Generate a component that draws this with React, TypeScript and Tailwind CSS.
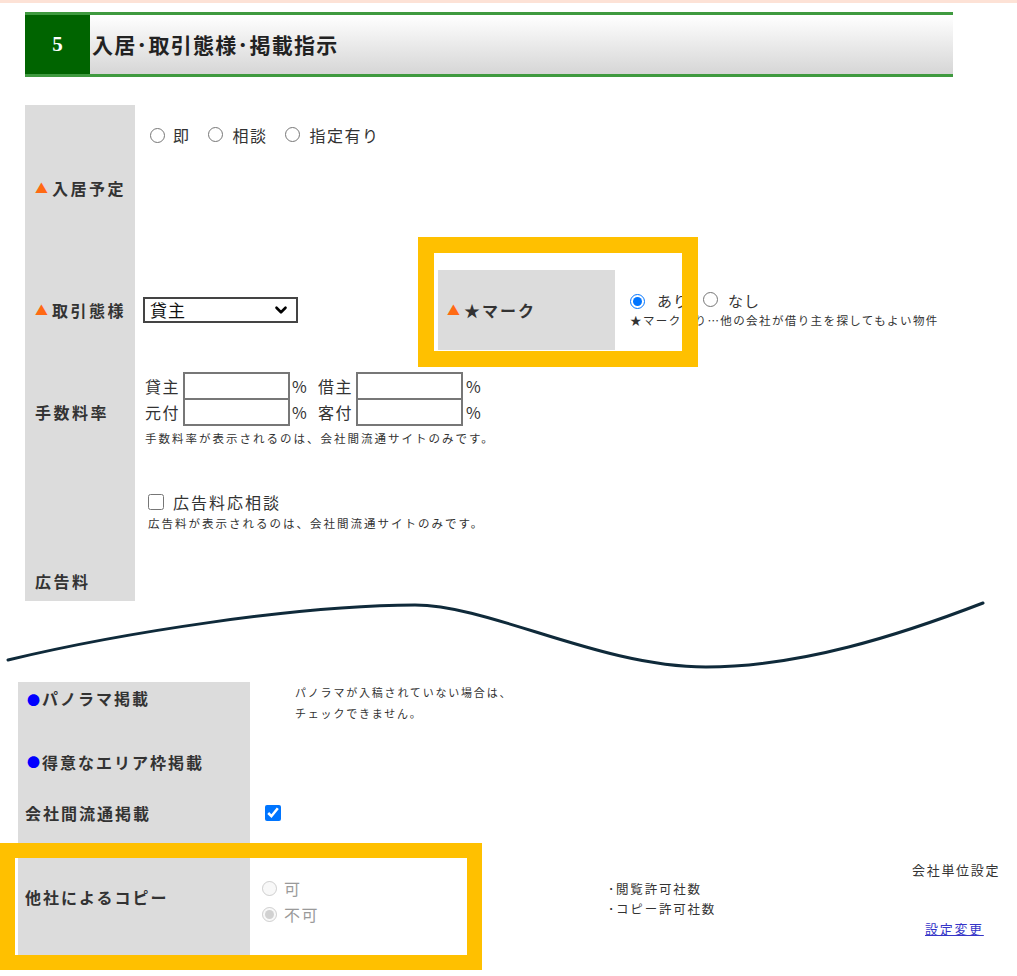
import { ChevronDown } from 'lucide-react'
import type { ReactNode } from 'react'

function Tri() {
  return <span className="text-[#ff6a13] text-[13px] mr-[4px] tracking-normal">▲</span>
}

function Dot() {
  return <span className="text-[#0000ff] text-[13px] mr-[2px] tracking-normal">●</span>
}

function Label({ children, className = '' }: { children: ReactNode; className?: string }) {
  return (
    <div className={`w-[110px] shrink-0 bg-[#dcdcdc] flex pl-[10px] font-bold text-[16px] tracking-[2.5px] text-[#333] ${className}`}>
      {children}
    </div>
  )
}

function Radio({ name, checked, disabled }: { name: string; checked?: boolean; disabled?: boolean }) {
  return (
    <input
      type="radio"
      name={name}
      defaultChecked={checked}
      disabled={disabled}
      className="m-0 w-[15px] h-[15px] accent-[#0075ff]"
    />
  )
}

function FeeInput() {
  return <div className="w-[107px] h-[28px] border-2 border-[#777] bg-white" />
}

export default function App() {
  return (
    <div className="relative w-[1017px] h-[976px] bg-white overflow-hidden font-['Noto_Sans_CJK_JP','Noto_Sans',sans-serif] text-[#333]">
      <div className="h-[3px] bg-[#fde2d6]" />

      {/* section header */}
      <div className="ml-[25px] mt-[9px] w-[928px] h-[65px] flex border-y-[3px] border-[#3f9a3f]">
        <div className="w-[65px] bg-[#006400] flex items-center justify-center text-white font-bold text-[21px] font-['Liberation_Serif',serif]">
          5
        </div>
        <div className="flex-1 bg-linear-to-b from-white to-[#d6d6d6] flex items-center pl-[2px] text-[21px] font-bold tracking-[1.3px] text-[#222]">
          入居･取引態様･掲載指示
        </div>
      </div>

      {/* upper table */}
      <div className="ml-[25px] mt-[28px] w-[928px]">
        <div className="flex h-[165px]">
          <Label className="items-center">
            <Tri />入居予定
          </Label>
          <div className="flex items-center pl-[15px] pt-[18px] self-start text-[16px] tracking-[1.5px] leading-[24px]">
            <Radio name="nyukyo" />
            <span className="ml-[8px]">即</span>
            <span className="ml-[17px]"><Radio name="nyukyo" /></span>
            <span className="ml-[10px]">相談</span>
            <span className="ml-[17px]"><Radio name="nyukyo" /></span>
            <span className="ml-[10px]">指定有り</span>
          </div>
        </div>

        <div className="flex h-[80px]">
          <Label className="items-center">
            <Tri />取引態様
          </Label>
          <div className="flex flex-1">
            <div className="self-center ml-[8px] w-[155px] h-[26px] border-2 border-[#444] bg-white flex items-center justify-between pl-[5px] pr-[6px] text-[17px] tracking-[1px] text-[#111]">
              <span>貸主</span>
              <ChevronDown size={18} strokeWidth={3.5} className="text-black" />
            </div>
            <div className="ml-[140px] flex">
              <div className="w-[177px] bg-[#dcdcdc] flex items-center pl-[9px] font-bold text-[16px] tracking-[2px] text-[#333]">
                <Tri />★マーク
              </div>
              <div className="pl-[15px] pt-[20px]">
                <div className="flex items-center text-[15px] tracking-[1px] leading-[22px]">
                  <Radio name="star" checked />
                  <span className="ml-[12px]">あり</span>
                  <span className="ml-[14px]"><Radio name="star" /></span>
                  <span className="ml-[10px]">なし</span>
                </div>
                <div className="text-[11.5px] tracking-[1.4px] leading-[16px] whitespace-nowrap">
                  ★マークあり…他の会社が借り主を探してもよい物件
                </div>
              </div>
            </div>
          </div>
        </div>

        <div className="flex h-[124px]">
          <Label className="items-center">手数料率</Label>
          <div className="pl-[10px] pt-[22px] text-[16px] tracking-[1.5px]">
            <div className="flex items-center leading-[28px]">
              <span className="w-[38px]">貸主</span>
              <FeeInput />
              <span className="w-[28px] pl-[2px]">%</span>
              <span className="w-[38px]">借主</span>
              <FeeInput />
              <span className="pl-[3px]">%</span>
            </div>
            <div className="flex items-center leading-[28px] -mt-[2px]">
              <span className="w-[38px]">元付</span>
              <FeeInput />
              <span className="w-[28px] pl-[2px]">%</span>
              <span className="w-[38px]">客付</span>
              <FeeInput />
              <span className="pl-[3px]">%</span>
            </div>
            <div className="text-[11.5px] tracking-[2px] leading-[16px] mt-[4px] whitespace-nowrap">
              手数料率が表示されるのは、会社間流通サイトのみです。
            </div>
          </div>
        </div>

        <div className="flex h-[127px]">
          <Label className="items-end pb-[8px]">広告料</Label>
          <div className="pl-[13px] pt-[17px]">
            <div className="flex items-center text-[16px] tracking-[2px] leading-[22px]">
              <input type="checkbox" className="m-0 w-[16px] h-[16px]" />
              <span className="ml-[9px]">広告料応相談</span>
            </div>
            <div className="text-[11.5px] tracking-[2px] leading-[16px] mt-[2px] whitespace-nowrap">
              広告料が表示されるのは、会社間流通サイトのみです。
            </div>
          </div>
        </div>
      </div>

      {/* cut line */}
      <div className="h-[81px]">
        <svg width="1017" height="81" viewBox="0 0 1017 81" fill="none">
          <path
            d="M8 59 C 120 32, 300 4, 415 4 C 490 4, 600 66, 706 66 C 800 66, 900 34, 983 2"
            stroke="#0f2a3a"
            strokeWidth="3"
            strokeLinecap="round"
          />
        </svg>
      </div>

      {/* lower table */}
      <div className="ml-[18px] w-[999px]">
        <div className="flex h-[52px]">
          <div className="w-[232px] shrink-0 bg-[#dcdcdc] pl-[9px] pt-[5px] font-bold text-[16px] tracking-[2px] leading-[22px]">
            <Dot />パノラマ掲載
          </div>
          <div className="pl-[45px] text-[11px] tracking-[1.8px] leading-[21px]">
            <div>パノラマが入稿されていない場合は、</div>
            <div>チェックできません。</div>
          </div>
        </div>
        <div className="flex h-[56px]">
          <div className="w-[232px] shrink-0 bg-[#dcdcdc] pl-[9px] flex items-center font-bold text-[16px] tracking-[2px]">
            <Dot />得意なエリア枠掲載
          </div>
        </div>
        <div className="flex h-[46px]">
          <div className="w-[232px] shrink-0 bg-[#dcdcdc] pl-[7px] flex items-center font-bold text-[16px] tracking-[2px]">
            会社間流通掲載
          </div>
          <div className="pl-[15px] flex items-center">
            <input type="checkbox" defaultChecked className="m-0 w-[16px] h-[16px] accent-[#0075ff]" />
          </div>
        </div>
        <div className="flex h-[122px]">
          <div className="w-[232px] shrink-0 bg-[#dcdcdc] pl-[7px] flex items-center font-bold text-[16px] tracking-[2px]">
            他社によるコピー
          </div>
          <div className="flex flex-1">
            <div className="w-[358px] pl-[12px] pt-[8px] flex flex-col justify-center text-[16px] tracking-[1.5px] leading-[26px] text-[#9a9a9a]">
              <div className="flex items-center">
                <Radio name="copy" disabled />
                <span className="ml-[7px]">可</span>
              </div>
              <div className="flex items-center">
                <Radio name="copy" disabled checked />
                <span className="ml-[7px]">不可</span>
              </div>
            </div>
            <div className="w-[304px] flex flex-col justify-center pt-[4px] text-[12.5px] tracking-[1.8px] leading-[20px]">
              <div>･閲覧許可社数</div>
              <div>･コピー許可社数</div>
            </div>
            <div className="flex flex-col justify-between pt-[24px] pb-[19px] text-[13px] tracking-[1.7px] leading-[20px] whitespace-nowrap">
              <div>会社単位設定</div>
              <a href="#" className="ml-[13px] text-[#3535c8] underline">設定変更</a>
            </div>
          </div>
        </div>
      </div>

      {/* highlight frames */}
      <div className="absolute left-[418px] top-[237px] w-[280px] h-[130px] border-[16px] border-[#ffc000]" />
      <div className="absolute left-0 top-[843px] w-[482px] h-[127px] border-[15px] border-[#ffc000]" />
    </div>
  )
}
